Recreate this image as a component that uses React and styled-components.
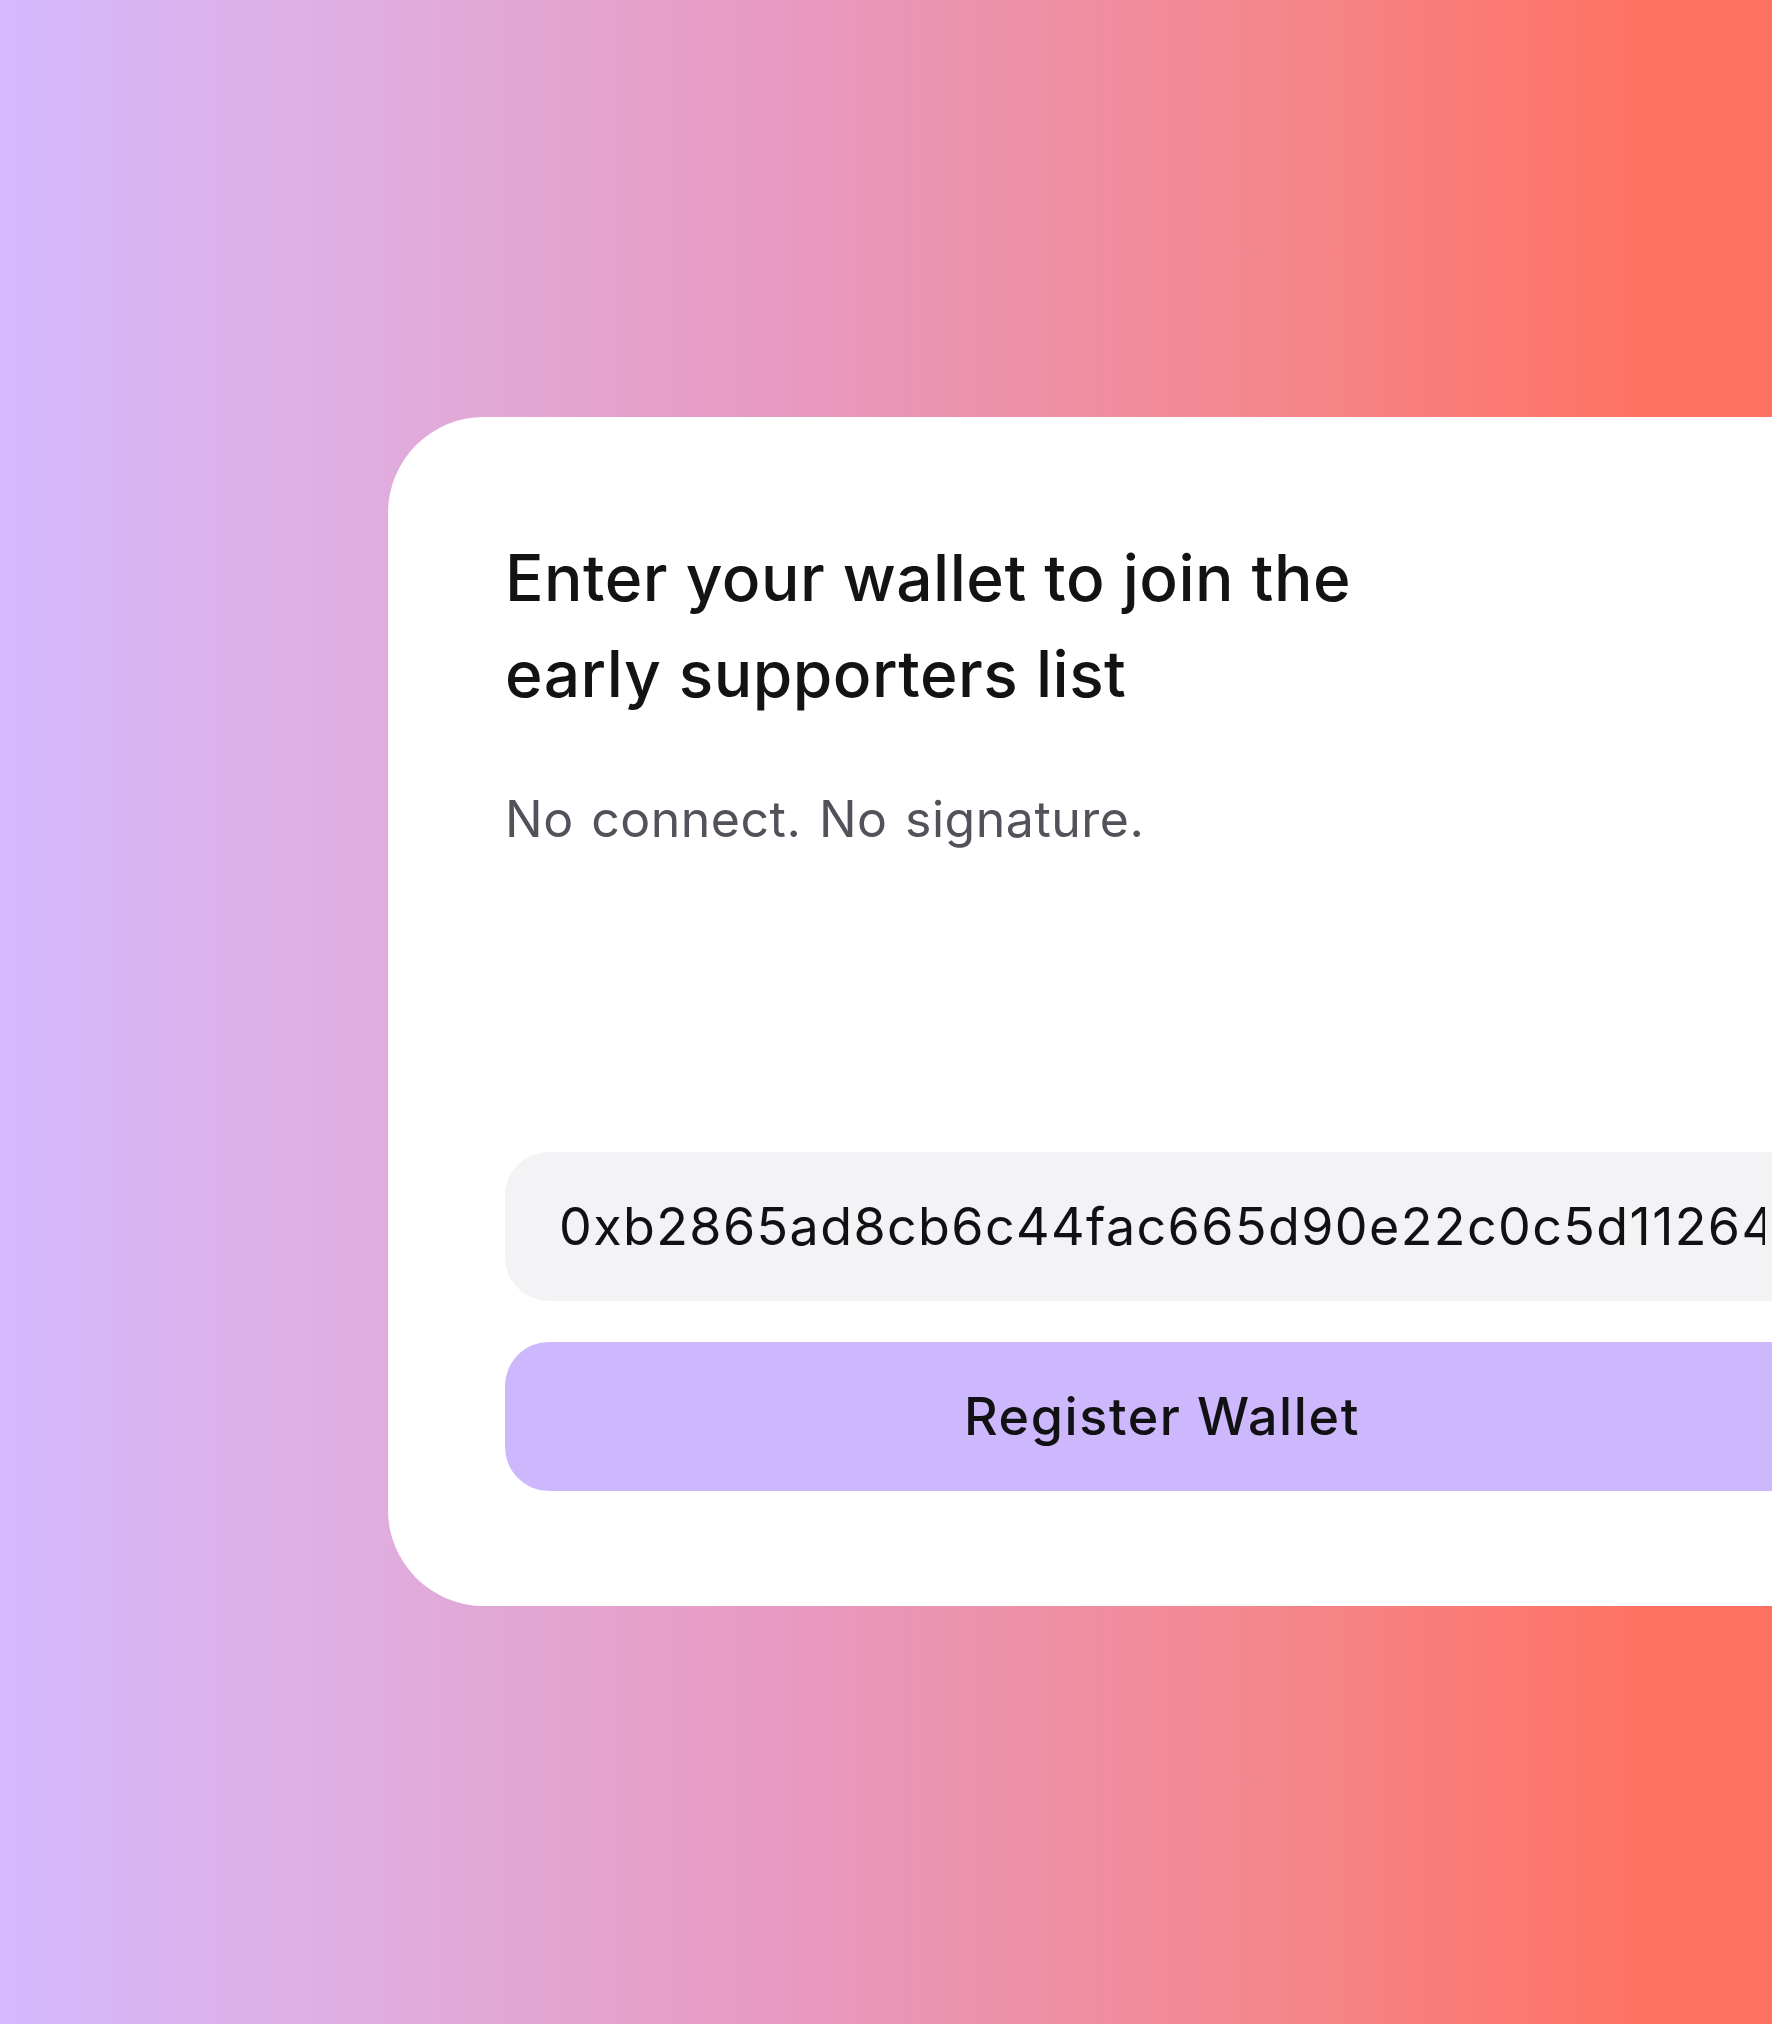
import React, { useState } from 'react'
import styled, { createGlobalStyle } from 'styled-components'

const GlobalStyle = createGlobalStyle`
  html, body {
    margin: 0;
    padding: 0;
  }
  body {
    font-family: Inter, "Liberation Sans", Arial, sans-serif;
    overflow: hidden;
  }
`

const Page = () => {
  const [wallet, setWallet] = useState('0xb2865ad8cb6c44fac665d90e22c0c5d11264a1f3')

  return (
    <Backdrop>
      <GlobalStyle />
      <Card>
        <Title>Enter your wallet to join the<br />early supporters list</Title>
        <Subtitle>No connect. No signature.</Subtitle>
        <Form onSubmit={e => e.preventDefault()}>
          <WalletInput value={wallet} onChange={e => setWallet(e.target.value)} spellCheck={false} />
          <SubmitButton type="submit">Register Wallet</SubmitButton>
        </Form>
      </Card>
    </Backdrop>
  )
}

export default Page

const Backdrop = styled.div`
  width: 1772px;
  height: 2024px;
  overflow: hidden;
  background: linear-gradient(90deg, #d5b8ff 0%, #dfaee0 20%, #e899c0 45%, #f38890 70%, #ff7262 93%, #ff7262 100%);
  padding: 417px 0 0 388px;
  box-sizing: border-box;
`

const Card = styled.div`
  width: 1548px;
  height: 1189px;
  box-sizing: border-box;
  background: #ffffff;
  border-radius: 96px;
  padding: 113px 117px 115px;
  display: flex;
  flex-direction: column;
`

const Title = styled.h1`
  margin: 0;
  font-size: 64px;
  line-height: 96px;
  font-weight: 500;
  color: #131316;
  letter-spacing: 0.5px;
`

const Subtitle = styled.p`
  margin: 60px 0 0;
  font-size: 50px;
  line-height: 75px;
  color: #52525b;
  letter-spacing: 0.5px;
  word-spacing: 3px;
`

const Form = styled.form`
  margin-top: auto;
  display: flex;
  flex-direction: column;
  gap: 41px;
`

const WalletInput = styled.input`
  height: 149px;
  box-sizing: border-box;
  border: none;
  outline: none;
  border-radius: 44px;
  background: #f3f3f5;
  padding: 0 54px;
  font-family: Inter, "Liberation Sans", Arial, sans-serif;
  font-size: 52px;
  letter-spacing: 1.4px;
  color: #111114;
`

const SubmitButton = styled.button`
  height: 149px;
  border: none;
  border-radius: 44px;
  background: #cdb8fd;
  font-family: Inter, "Liberation Sans", Arial, sans-serif;
  font-size: 52px;
  font-weight: 500;
  letter-spacing: 1.6px;
  color: #111114;
  cursor: pointer;
`
